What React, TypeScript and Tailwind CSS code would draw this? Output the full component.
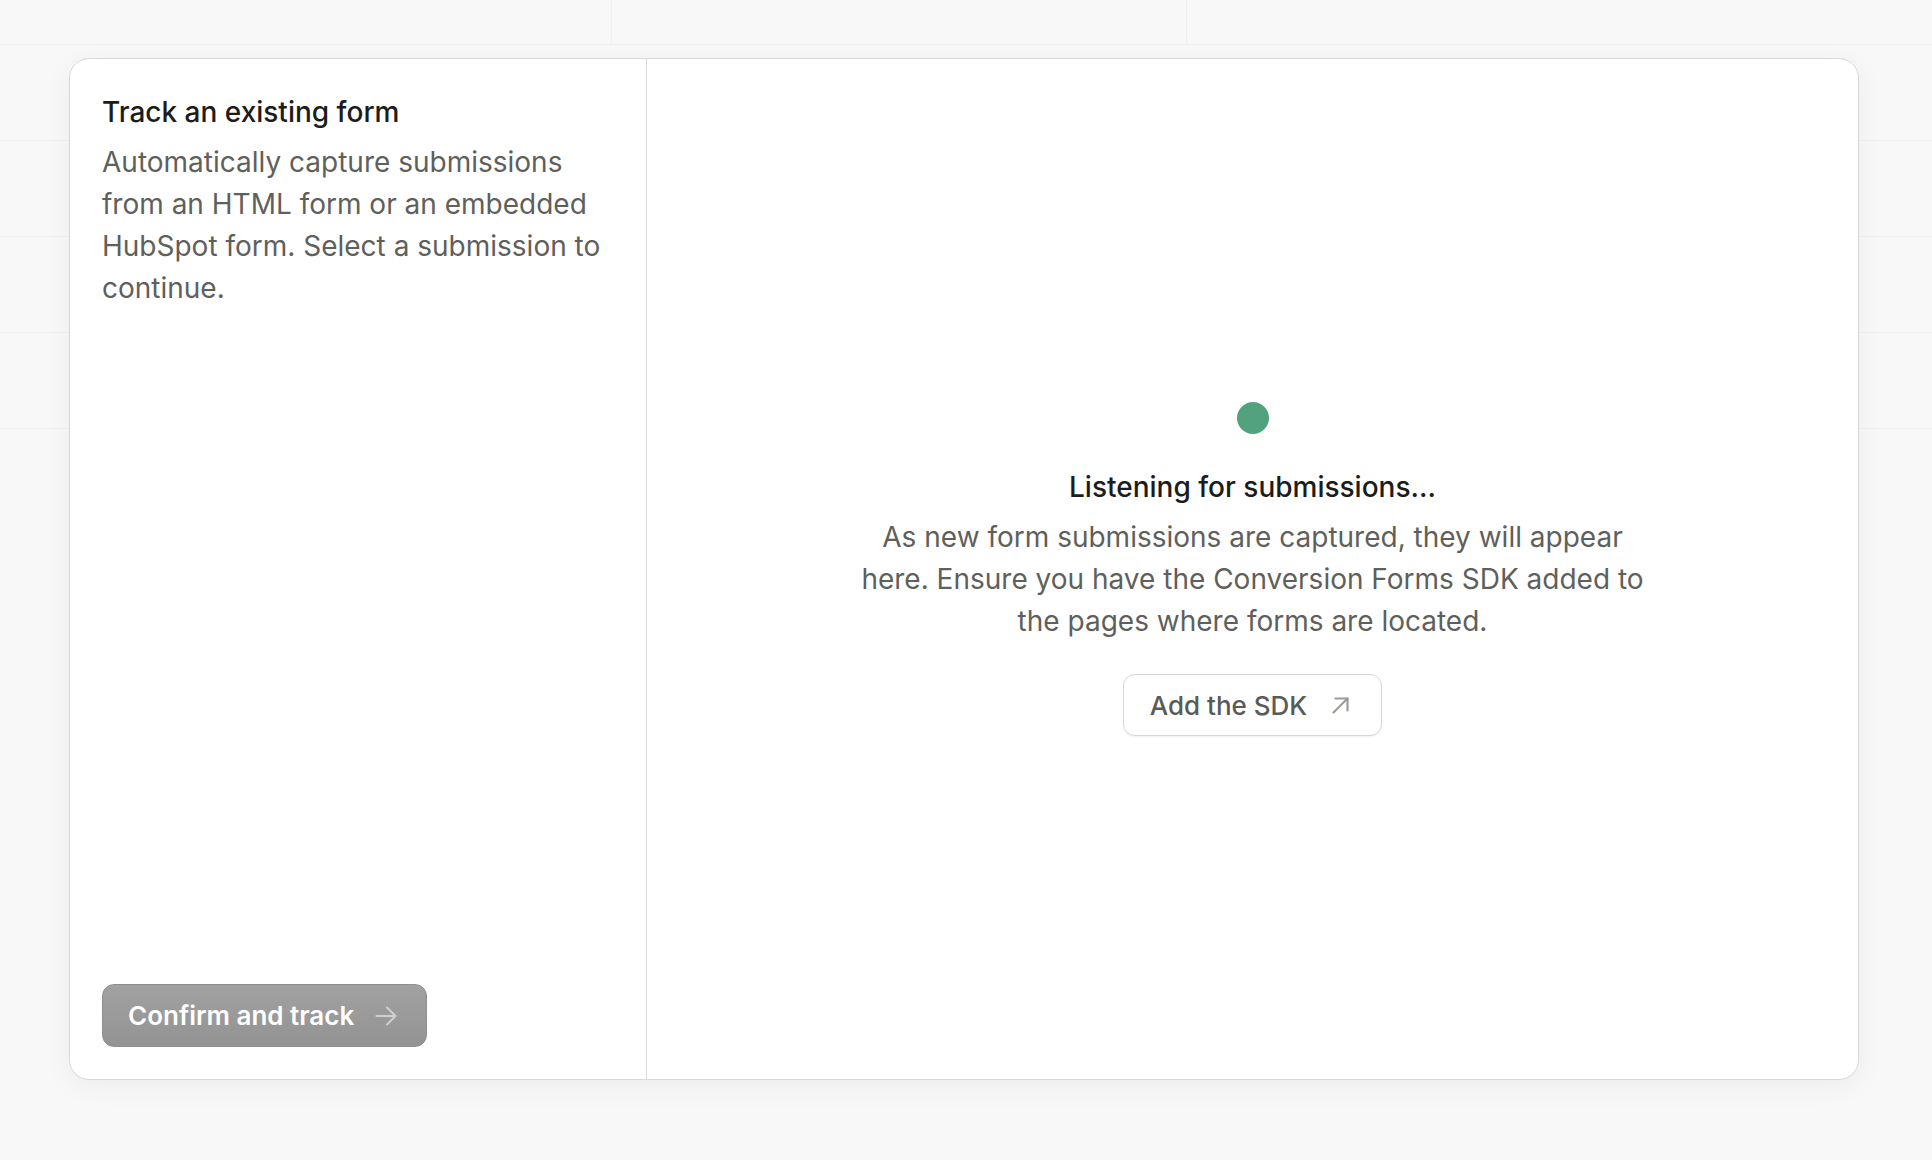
const rows = [0, 1, 2, 3]

function Backdrop() {
  return (
    <div className="w-full">
      <div className="flex h-[45px] border-b border-[#efefef]">
        <div className="w-[612px] border-r border-[#efefef]" />
        <div className="w-[575px] border-r border-[#efefef]" />
        <div className="flex-1" />
      </div>
      {rows.map((r) => (
        <div key={r} className="h-[96px] border-b border-[#efefef]" />
      ))}
    </div>
  )
}

function ArrowRightIcon() {
  return (
    <svg width="22" height="20" viewBox="0 0 22 20" fill="none" stroke="#d0d0d0" strokeWidth="2" strokeLinecap="round" strokeLinejoin="round">
      <path d="M1.5 10h19" />
      <path d="M12 1.5l8.5 8.5-8.5 8.5" />
    </svg>
  )
}

function ArrowUpRightIcon() {
  return (
    <svg width="17" height="17" viewBox="0 0 17 17" fill="none" stroke="#9c9b94" strokeWidth="2.2" strokeLinecap="round" strokeLinejoin="round">
      <path d="M1.5 15.5l14-14" />
      <path d="M3.5 1.5h12v12" />
    </svg>
  )
}

export default function App() {
  return (
    <div
      className="relative w-full h-[1160px] bg-[#f8f8f8] overflow-hidden"
      style={{ fontFamily: 'Inter, "Noto Sans", sans-serif' }}
    >
      <Backdrop />

      {/* Modal card */}
      <div className="absolute left-[69px] top-[58px] w-[1790px] h-[1022px] flex bg-white rounded-[20px] border-[1.5px] border-[#d8d8d4] shadow-[0_6px_28px_rgba(0,0,0,0.05)] overflow-hidden">
        {/* Left panel */}
        <div className="w-[577px] shrink-0 border-r-[1.5px] border-[#d8d8d4] p-8 flex flex-col justify-between">
          <div>
            <h2 className="text-[28px] leading-[42px] font-medium text-[#1c1c1a]">
              Track an existing form
            </h2>
            <p className="mt-2 text-[28px] leading-[42px] text-[#5f5f5c]">
              Automatically capture submissions from an HTML form or an embedded HubSpot form. Select a submission to continue.
            </p>
          </div>

          <button className="self-start flex items-center gap-[21px] h-[63px] pl-[25px] pr-[29px] rounded-[12px] border-[1.5px] border-[#8e8e8e] bg-gradient-to-b from-[#a1a1a1] to-[#939393] text-white text-[26px] font-semibold">
            Confirm and track
            <ArrowRightIcon />
          </button>
        </div>

        {/* Right panel */}
        <div className="flex-1 flex flex-col items-center justify-center text-center">
          <div className="w-[32px] h-[32px] rounded-full bg-[#52a27e]" />
          <h3 className="mt-8 text-[28px] leading-[42px] font-medium text-[#1c1c1a]">
            Listening for submissions...
          </h3>
          <p className="mt-2 max-w-[795px] text-[28px] leading-[42px] text-[#5f5f5c]">
            As new form submissions are captured, they will appear here. Ensure you have the Conversion Forms SDK added to the pages where forms are located.
          </p>
          <button className="mt-8 flex items-center gap-[25px] h-[62px] pl-[26px] pr-[32px] rounded-[12px] border-[1.5px] border-[#d6d6d2] bg-white shadow-[0_1px_2px_rgba(0,0,0,0.06)] text-[26px] font-medium text-[#5a5a57]">
            Add the SDK
            <ArrowUpRightIcon />
          </button>
        </div>
      </div>
    </div>
  )
}
